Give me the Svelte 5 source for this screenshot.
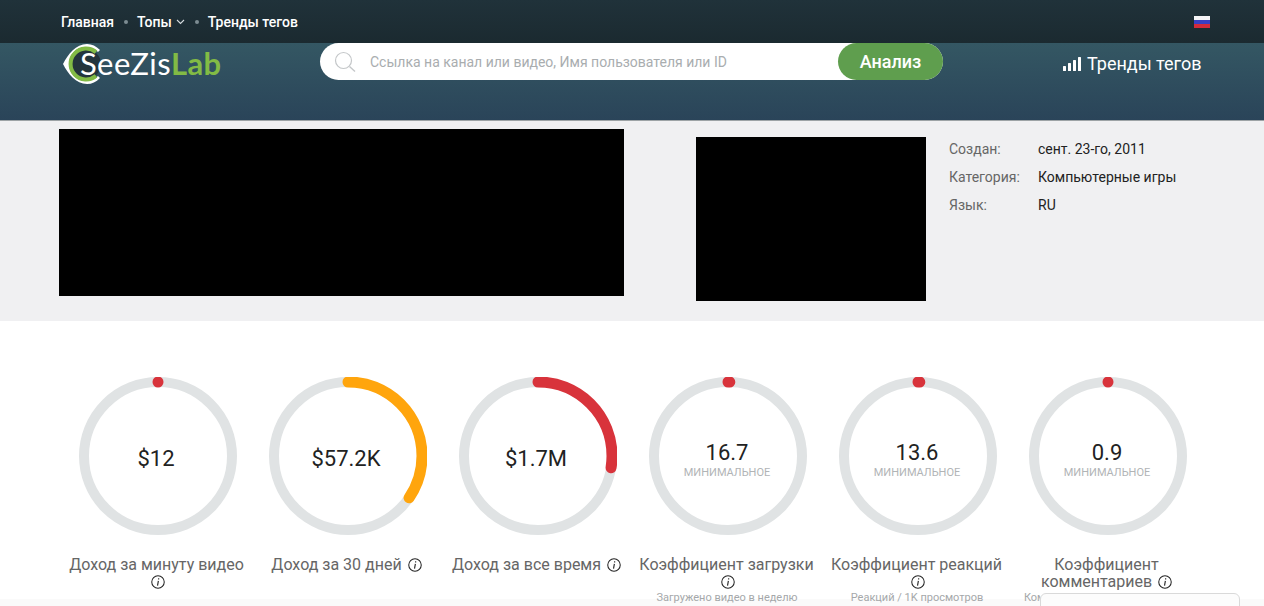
<script lang="ts">
	type Metric = {
		value: string;
		label: string;
		level?: string;
		sub?: string;
		pct: number;
		color: string;
	};

	const metrics: Metric[] = [
		{ value: '$12', label: 'Доход за минуту видео', pct: 0, color: '#d8333b' },
		{ value: '$57.2K', label: 'Доход за 30 дней', pct: 34.5, color: '#ffa50d' },
		{ value: '$1.7M', label: 'Доход за все время', pct: 27.5, color: '#d8333b' },
		{ value: '16.7', level: 'МИНИМАЛЬНОЕ', label: 'Коэффициент загрузки', sub: 'Загружено видео в неделю', pct: 0.4, color: '#d8333b' },
		{ value: '13.6', level: 'МИНИМАЛЬНОЕ', label: 'Коэффициент реакций', sub: 'Реакций / 1K просмотров', pct: 0.4, color: '#d8333b' },
		{ value: '0.9', level: 'МИНИМАЛЬНОЕ', label: 'Коэффициент комментариев', sub: 'Комментариев / 1K просмотров', pct: 0, color: '#d8333b' }
	];

	const info = [
		['Создан:', 'сент. 23-го, 2011'],
		['Категория:', 'Компьютерные игры'],
		['Язык:', 'RU']
	];

	const r = 74;
	const circ = 2 * Math.PI * r;
</script>

<div class="page">
	<nav class="topbar">
		<a href="#home">Главная</a>
		<span class="dot"></span>
		<a href="#tops">Топы
			<svg class="chev" width="9" height="6" viewBox="0 0 9 6"><path d="M1 1l3.5 3.5L8 1" fill="none" stroke="#d5dbde" stroke-width="1.1" /></svg>
		</a>
		<span class="dot"></span>
		<a href="#trends">Тренды тегов</a>
		<svg class="flag" width="16" height="12" viewBox="0 0 16 12">
			<rect width="16" height="4" fill="#f4f4f6" />
			<rect y="4" width="16" height="4" fill="#3a3fc4" />
			<rect y="8" width="16" height="4" fill="#d42b3c" />
		</svg>
	</nav>

	<header class="header">
		<div class="logo">
			<svg class="eye" width="46" height="42" viewBox="0 0 46 42">
				<circle cx="24" cy="21" r="15" fill="#24343c" />
				<path d="M38 7C34 3 30 1 25 1 14 1 6 11 1 21c5 10 13 20 24 20 5 0 9-2 13-6l-2-2A17 17 0 1 1 36 9z" fill="#fff" />
				<path d="M34 9.1A15.5 15.5 0 1 0 34 32.9" fill="none" stroke="#82bb45" stroke-width="4" />
			</svg>
			<span class="logo-text">SeeZis<b>Lab</b></span>
		</div>

		<form class="search">
			<svg class="glass" width="22" height="22" viewBox="0 0 22 22">
				<circle cx="9.5" cy="9.5" r="8" fill="none" stroke="#c4c7c9" stroke-width="1.2" />
				<path d="M15.5 15.5L21 20.5" stroke="#c4c7c9" stroke-width="1.4" />
			</svg>
			<span class="placeholder">Ссылка на канал или видео, Имя пользователя или ID</span>
			<button type="button">Анализ</button>
		</form>

		<a class="trends" href="#trends">
			<svg width="18" height="14" viewBox="0 0 18 14">
				<rect x="0" y="9" width="3" height="5" rx="0.5" fill="#fff" />
				<rect x="5" y="6" width="3" height="8" rx="0.5" fill="#fff" />
				<rect x="10" y="3" width="3" height="11" rx="0.5" fill="#fff" />
				<rect x="15" y="0" width="3" height="14" rx="0.5" fill="#fff" />
			</svg>
			Тренды тегов
		</a>
	</header>

	<section class="channel">
		<div class="banner"></div>
		<div class="thumb"></div>
		<dl class="info">
			{#each info as row}
				<dt>{row[0]}</dt>
				<dd>{row[1]}</dd>
			{/each}
		</dl>
	</section>

	<section class="metrics">
		{#each metrics as m}
			<div class="metric">
				<div class="ring">
					<svg width="158" height="158" viewBox="0 0 158 158">
						<circle cx="79" cy="79" {r} fill="none" stroke="#e0e3e4" stroke-width="10" />
						<circle
							cx="79"
							cy="79"
							{r}
							fill="none"
							stroke={m.color}
							stroke-width="11"
							stroke-linecap="round"
							stroke-dasharray="{(circ * m.pct) / 100} {circ}"
							transform="rotate(-90 79 79)"
						/>
					</svg>
					<div class="ring-text" class:has-level={m.level}>
						<span class="value">{m.value}</span>
						{#if m.level}<span class="level">{m.level}</span>{/if}
					</div>
				</div>
				<div class="label">
					{m.label}
					<svg class="i" width="14" height="14" viewBox="0 0 15 15">
						<circle cx="7.5" cy="7.5" r="6.7" fill="none" stroke="#222" stroke-width="1.1" />
						<path d="M8.2 3.6v1.3M7.9 6.3l-.9 5" stroke="#222" stroke-width="1.2" fill="none" />
					</svg>
				</div>
				{#if m.sub}<div class="sub">{m.sub}</div>{/if}
			</div>
		{/each}
	</section>

	<div class="popup"></div>
</div>

<style>
	:global(body) {
		margin: 0;
		background: #fff;
		overflow: hidden;
	}

	.page {
		position: relative;
		width: 1264px;
		height: 606px;
		overflow: hidden;
		font-family: Roboto, 'Liberation Sans', sans-serif;
	}

	.topbar {
		height: 43px;
		box-sizing: border-box;
		padding: 1px 54px 0 61px;
		display: flex;
		align-items: center;
		gap: 9px;
		background: linear-gradient(#20323a, #1b2a30);
		font-size: 14px;
		font-weight: 500;
	}

	.topbar a {
		color: #fff;
		text-decoration: none;
		display: flex;
		align-items: center;
		gap: 4px;
	}

	.dot {
		width: 4px;
		height: 4px;
		border-radius: 50%;
		background: #7d8c92;
		margin-left: 1px;
	}

	.flag {
		margin-left: auto;
	}

	.header {
		height: 78px;
		box-sizing: border-box;
		display: flex;
		align-items: flex-start;
		background: linear-gradient(#345763, #2a4459);
		border-bottom: 1px solid #9da3a6;
		padding-left: 62px;
	}

	.logo {
		width: 258px;
		display: flex;
		align-items: center;
		height: 40px;
		position: relative;
	}

	.eye {
		position: absolute;
		left: 0;
		top: 0;
	}

	.logo-text {
		position: relative;
		margin-left: 18px;
		font-family: Lato, sans-serif;
		font-size: 31px;
		color: #fff;
		letter-spacing: 0.4px;
		line-height: 40px;
	}

	.logo-text b {
		color: #82bb45;
		font-weight: 700;
	}

	.search {
		width: 623px;
		height: 37px;
		display: flex;
		align-items: center;
		background: #fff;
		border-radius: 19px;
		box-sizing: border-box;
		padding-left: 14px;
		margin: 0;
	}

	.placeholder {
		margin-left: 14px;
		font-size: 14px;
		color: #a9adaf;
	}

	.search button {
		margin-left: auto;
		width: 105px;
		height: 37px;
		border: none;
		border-radius: 19px;
		background: #5f9e4e;
		color: #fff;
		font-family: inherit;
		font-size: 18px;
		font-weight: 500;
	}

	.trends {
		margin-left: 120px;
		margin-top: 10px;
		display: flex;
		align-items: center;
		gap: 6px;
		color: #fff;
		font-size: 18px;
		text-decoration: none;
	}

	.channel {
		height: 200px;
		box-sizing: border-box;
		background: #f0f0f2;
		display: flex;
		align-items: flex-start;
		padding: 8px 0 0 59px;
	}

	.banner {
		width: 565px;
		height: 167px;
		background: #000;
	}

	.thumb {
		width: 230px;
		height: 164px;
		background: #000;
		margin: 8px 0 0 72px;
	}

	.info {
		margin: 10px 0 0 23px;
		display: grid;
		grid-template-columns: 89px auto;
		grid-auto-rows: 28px;
		font-size: 14px;
		line-height: 20px;
	}

	.info dt {
		color: #666;
	}

	.info dd {
		margin: 0;
		color: #222;
	}

	.metrics {
		display: grid;
		grid-template-columns: repeat(6, 190px);
		padding: 56px 0 0 62px;
		background: linear-gradient(#fff 278px, #fafafa 278px);
		height: 229px;
	}

	.metric {
		display: flex;
		flex-direction: column;
		align-items: center;
		text-align: center;
	}

	.ring {
		width: 158px;
		height: 158px;
		margin-left: 2px;
		position: relative;
	}

	.ring svg {
		display: block;
	}

	.ring-text {
		position: absolute;
		inset: 0;
		box-sizing: border-box;
		padding: 6px 4px 0 0;
		display: flex;
		flex-direction: column;
		align-items: center;
		justify-content: center;
	}

	.ring-text.has-level {
		padding: 8px 2px 0 0;
	}

	.value {
		font-size: 22px;
		line-height: 26px;
		color: #222;
	}

	.level {
		font-size: 11px;
		line-height: 14px;
		color: #b1b4b6;
	}

	.label {
		margin: 21px 1px 0 0;
		width: 180px;
		font-size: 16px;
		line-height: 17px;
		color: #666;
	}

	.i {
		vertical-align: -2px;
		margin-left: 2px;
	}

	.sub {
		margin-top: 1px;
		font-size: 11px;
		line-height: 14px;
		color: #a5a8aa;
		white-space: nowrap;
	}

	.popup {
		position: absolute;
		left: 1040px;
		top: 593px;
		width: 198px;
		height: 30px;
		background: #fcfcfc;
		border: 1px solid #d9d9d9;
		border-radius: 6px;
	}
</style>
